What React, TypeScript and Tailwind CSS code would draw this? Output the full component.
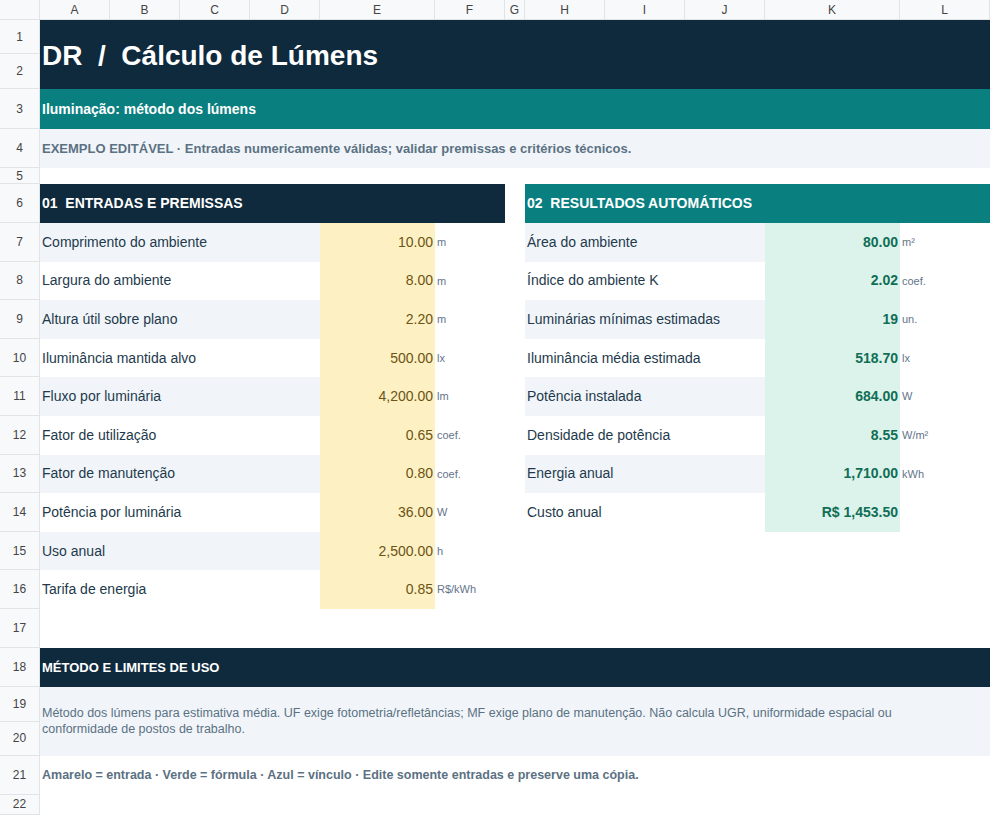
const F = { fontFamily: '"Liberation Sans", Arial, sans-serif' };
const cols: [string, number][] = [["A",70],["B",70],["C",70],["D",70],["E",115],["F",70],["G",20],["H",80],["I",80],["J",80],["K",135],["L",90]];

function RH({ n, h }: { n: number | string; h: string }) {
  return <div className={`w-[40px] shrink-0 ${h} bg-[#f8f9fa] border-r border-b border-[#e2e3e5] flex items-center justify-center text-[12px] text-[#444]`}>{n}</div>;
}

const left: [string, string, string][] = [
  ["Comprimento do ambiente","10.00","m"],["Largura do ambiente","8.00","m"],["Altura útil sobre plano","2.20","m"],
  ["Iluminância mantida alvo","500.00","lx"],["Fluxo por luminária","4,200.00","lm"],["Fator de utilização","0.65","coef."],
  ["Fator de manutenção","0.80","coef."],["Potência por luminária","36.00","W"],["Uso anual","2,500.00","h"],["Tarifa de energia","0.85","R$/kWh"],
];
const right: [string, string, string][] = [
  ["Área do ambiente","80.00","m²"],["Índice do ambiente K","2.02","coef."],["Luminárias mínimas estimadas","19","un."],
  ["Iluminância média estimada","518.70","lx"],["Potência instalada","684.00","W"],["Densidade de potência","8.55","W/m²"],
  ["Energia anual","1,710.00","kWh"],["Custo anual","R$ 1,453.50",""],
];

export default function App() {
  return (
    <div style={F} className="w-[990px] h-[815px] overflow-hidden bg-white text-[#1e3a4c]">
      <div className="flex h-[20px]">
        <div className="w-[40px] bg-[#f8f9fa] border-r border-b border-[#e2e3e5]" />
        {cols.map(([c, w]) => (
          <div key={c} style={{ width: w }} className="shrink-0 bg-[#f8f9fa] border-r border-b border-[#e2e3e5] flex items-center justify-center text-[12px] text-[#444]">{c}</div>
        ))}
      </div>
      <div className="flex h-[69px]">
        <div className="flex flex-col"><RH n={1} h="h-[34px]" /><RH n={2} h="h-[35px]" /></div>
        <div className="flex-1 bg-[#0f2a3d] text-white text-[28px] font-bold flex items-center pl-[2px] pt-[2px] whitespace-pre">DR  /  Cálculo de Lúmens</div>
      </div>
      <div className="flex h-[40px]">
        <RH n={3} h="h-[40px]" />
        <div className="flex-1 bg-[#0a7f80] text-white text-[14px] font-bold flex items-center pl-[2px]">Iluminação: método dos lúmens</div>
      </div>
      <div className="flex h-[39px]">
        <RH n={4} h="h-[39px]" />
        <div className="flex-1 bg-[#f1f5f9] text-[#5b7183] text-[13px] font-bold flex items-center pl-[2px]">EXEMPLO EDITÁVEL · Entradas numericamente válidas; validar premissas e critérios técnicos.</div>
      </div>
      <div className="flex h-[16px]"><RH n={5} h="h-[16px]" /></div>
      <div className="flex h-[39px]">
        <RH n={6} h="h-[39px]" />
        <div className="w-[465px] bg-[#0f2a3d] text-white text-[14px] font-bold flex items-center pl-[2px] whitespace-pre">01  ENTRADAS E PREMISSAS</div>
        <div className="w-[20px]" />
        <div className="w-[465px] bg-[#0a7f80] text-white text-[14px] font-bold flex items-center pl-[2px] whitespace-pre">02  RESULTADOS AUTOMÁTICOS</div>
      </div>
      {left.map(([l, v, u], i) => {
        const r = right[i];
        const bg = i % 2 === 0 ? "bg-[#f1f5f9]" : "bg-white";
        return (
          <div key={i} className="flex h-[38.6px]">
            <RH n={7 + i} h="h-[38.6px]" />
            <div className={`w-[280px] ${bg} flex items-center pl-[2px] text-[14px]`}>{l}</div>
            <div className="w-[115px] bg-[#fdf0c2] flex items-center justify-end pr-[2px] text-[14px] text-[#6b5416]">{v}</div>
            <div className="w-[70px] flex items-center pl-[2px] text-[11px] text-[#64748b]">{u}</div>
            <div className="w-[20px]" />
            {r ? (
              <>
                <div className={`w-[240px] ${bg} flex items-center pl-[2px] text-[14px]`}>{r[0]}</div>
                <div className="w-[135px] bg-[#dcf3ec] flex items-center justify-end pr-[2px] text-[14px] font-bold text-[#0f6e55]">{r[1]}</div>
                <div className="w-[90px] flex items-center pl-[2px] text-[11px] text-[#64748b]">{r[2]}</div>
              </>
            ) : null}
          </div>
        );
      })}
      <div className="flex h-[39px]"><RH n={17} h="h-[39px]" /></div>
      <div className="flex h-[39px]">
        <RH n={18} h="h-[39px]" />
        <div className="flex-1 bg-[#0f2a3d] text-white text-[13px] font-bold flex items-center pl-[2px]">MÉTODO E LIMITES DE USO</div>
      </div>
      <div className="flex h-[69px]">
        <div className="flex flex-col"><RH n={19} h="h-[35px]" /><RH n={20} h="h-[34px]" /></div>
        <div className="flex-1 bg-[#f1f5f9] text-[#5b7183] text-[12.5px] leading-[16px] flex items-center pl-[2px] pr-[20px]">Método dos lúmens para estimativa média. UF exige fotometria/refletâncias; MF exige plano de manutenção. Não calcula UGR, uniformidade espacial ou conformidade de postos de trabalho.</div>
      </div>
      <div className="flex h-[39px]">
        <RH n={21} h="h-[39px]" />
        <div className="flex-1 text-[#5b7183] text-[12.5px] font-bold flex items-center pl-[2px]">Amarelo = entrada · Verde = fórmula · Azul = vínculo · Edite somente entradas e preserve uma cópia.</div>
      </div>
      <div className="flex h-[20px]"><RH n={22} h="h-[20px]" /></div>
    </div>
  );
}
